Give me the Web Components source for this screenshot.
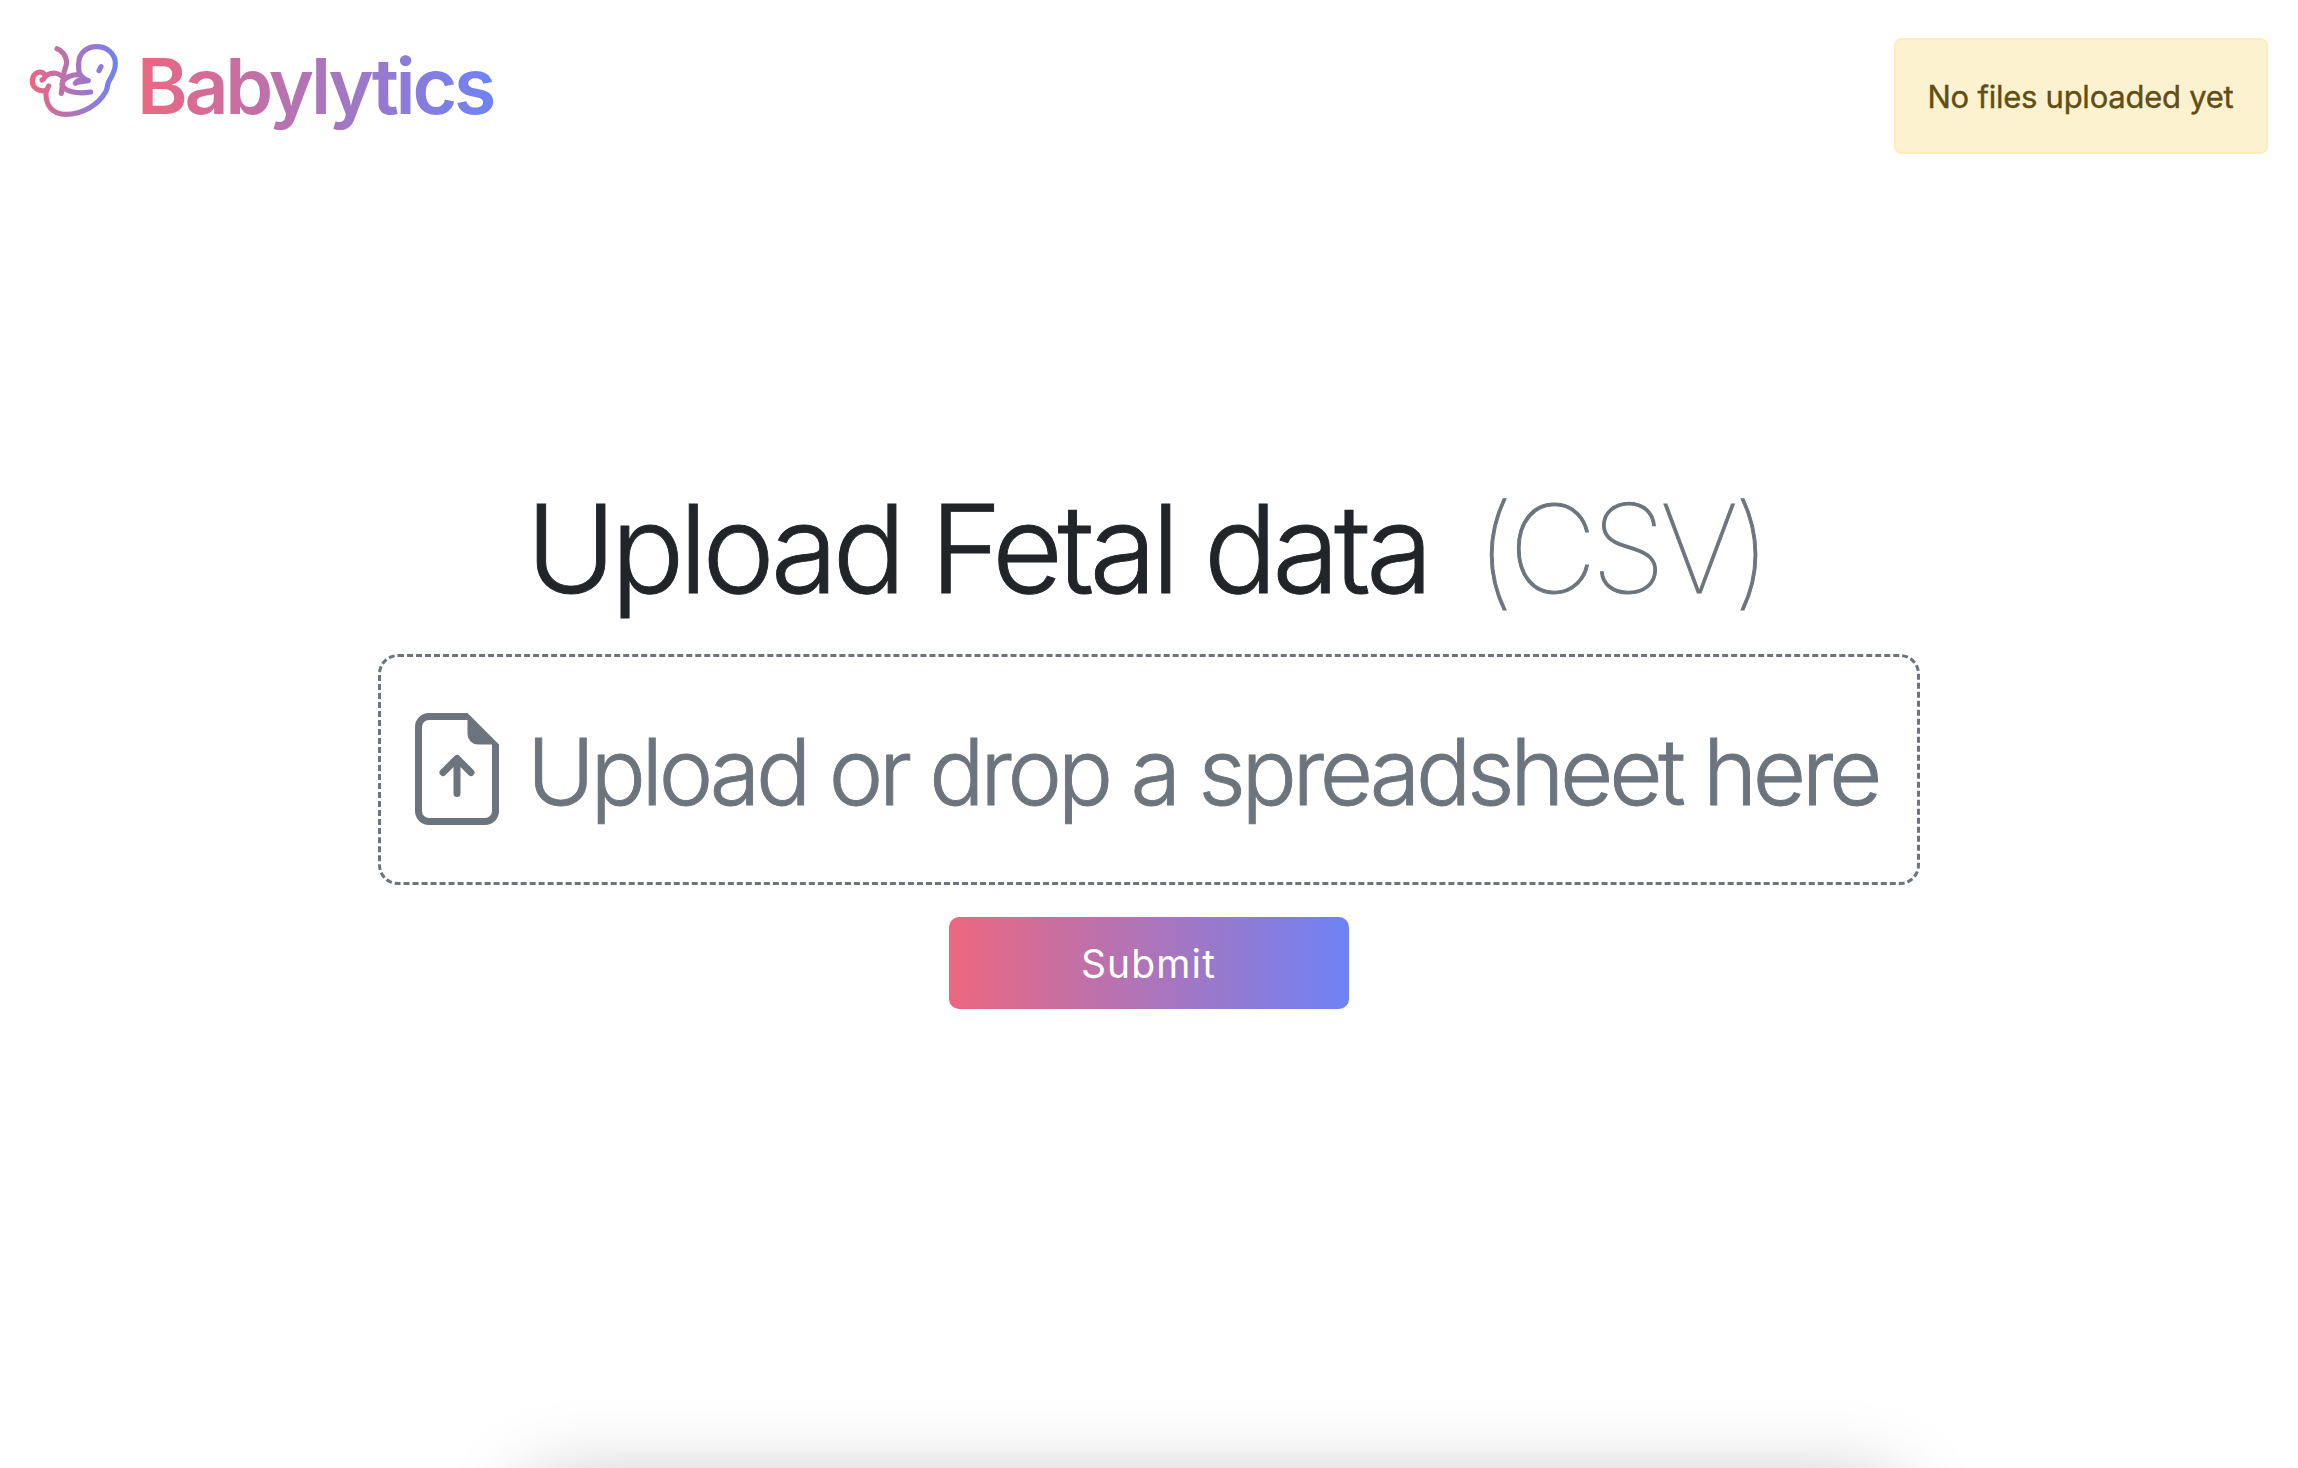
<!DOCTYPE html>
<html lang="en">
<head>
<meta charset="utf-8">
<title>Babylytics</title>
<style>
html, body { margin: 0; height: 100%; background: #fff; overflow: hidden; }
body { font-family: Inter, "Liberation Sans", sans-serif; color: #212529; }
</style>
</head>
<body>
<baby-app></baby-app>
<script>
const define = (name, html) => {
  const template = document.createElement('template');
  template.innerHTML = html;
  customElements.define(name, class extends HTMLElement {
    constructor() {
      super();
      this.attachShadow({ mode: 'open' }).append(template.content.cloneNode(true));
    }
  });
};

define('baby-logo', `
<style>
:host { display: block; width: 110px; height: 100px; }
svg { display: block; }
</style>
<svg width="110" height="100" viewBox="0 -15 330 300" fill="none" stroke="url(#g)" stroke-width="15.5" stroke-linecap="round" stroke-linejoin="round">
  <defs><linearGradient id="g" gradientUnits="userSpaceOnUse" x1="30" y1="0" x2="294" y2="0"><stop offset="0" stop-color="#ec677f"/><stop offset="1" stop-color="#6e82f5"/></linearGradient></defs>
  <path d="M111 41C127 46 138 63 140 79C141 96 131 101 131 121L124 175"/>
  <path d="M204 137C190 131 176 119 176 101V86C176 54 200 35 230 35C261 35 286 56 286 86C286 110 274 125 266 140C261 150 264 160 256 172C237 207 190 238 137 238C97 238 78 211 78 178C78 165 83 159 86 153"/>
  <path d="M78 167C58 170 37 160 37 138C37 121 49 111 62 111C69 112 71 115 74 119"/>
  <path d="M66 135C75 132 74 124 83 119C99 111 116 114 125 123"/>
  <path d="M128 139C138 126 157 119 178 119"/>
  <path d="M126 148C132 170 172 178 212 171"/>
  <path d="M166 145C171 136 180 133 190 132L204 137C193 141 179 138 166 145"/>
  <path d="M243 95L237 107"/>
</svg>`);

define('baby-brand', `
<style>
:host { display: flex; align-items: flex-start; gap: 7px; }
.name { margin-top: 9px; font-size: 77px; line-height: 94px; font-weight: 600; letter-spacing: -3.3px; white-space: nowrap;
  background: linear-gradient(90deg, #ec677f, #6e82f5); -webkit-background-clip: text; background-clip: text; color: transparent; }
</style>
<baby-logo></baby-logo>
<span class="name"><slot></slot></span>`);

define('baby-alert', `
<style>
:host { display: flex; align-items: center; box-sizing: border-box; width: 374px; height: 116px; padding: 1px 0 0 31.5px;
  border: 2px solid #feecb9; border-radius: 8px; background: #fdf2d0; color: #614e14;
  font-size: 31px; line-height: 38px; letter-spacing: -0.25px; white-space: nowrap; -webkit-text-stroke: 0.4px currentColor; }
</style>
<slot></slot>`);

define('baby-title', `
<style>
:host { display: flex; gap: 48px; margin-right: 7px; font-size: 122.5px; line-height: 148px; font-weight: 300;
  letter-spacing: -5.37px; white-space: nowrap; -webkit-text-stroke: 0.9px currentColor; }
.hint { color: #6c757d; font-weight: 100; letter-spacing: -6px; font-feature-settings: "calt" 0; -webkit-text-stroke: 1px #6c757d; }
</style>
<span><slot></slot></span>
<span class="hint"><slot name="hint"></slot></span>`);

define('baby-dropzone', `
<style>
:host { display: flex; align-items: center; gap: 14px; box-sizing: border-box; width: 1542px; height: 231px; padding-left: 20px;
  border: 3px dashed #6c757d; border-radius: 20px; color: #6c757d; }
svg { display: block; flex: none; margin-bottom: 1px; }
span { padding-top: 3px; font-size: 92px; line-height: 111px; font-weight: 300; letter-spacing: -4.3px; white-space: nowrap; -webkit-text-stroke: 0.9px currentColor; }
</style>
<svg width="112" height="112" viewBox="0 0 16 16" fill="currentColor">
  <path d="M8.5 11.5a.5.5 0 0 1-1 0V7.707L6.354 8.854a.5.5 0 1 1-.708-.708l2-2a.5.5 0 0 1 .708 0l2 2a.5.5 0 0 1-.708.708L8.5 7.707V11.5z"/>
  <path d="M14 14V4.5L9.5 0H4a2 2 0 0 0-2 2v12a2 2 0 0 0 2 2h8a2 2 0 0 0 2-2zM9.5 3A1.5 1.5 0 0 0 11 4.5h2V14a1 1 0 0 1-1 1H4a1 1 0 0 1-1-1V2a1 1 0 0 1 1-1h5.5v2z"/>
</svg>
<span><slot></slot></span>`);

define('baby-button', `
<style>
:host { display: block; }
button { display: flex; align-items: center; justify-content: center; width: 400px; height: 92px; padding: 0 1px 0 0; border: 0; border-radius: 10px;
  background: linear-gradient(90deg, #ec677f, #6e82f5); color: #fff; font: 400 39px/47px Inter, sans-serif; letter-spacing: 1.15px; }
</style>
<button type="button"><slot></slot></button>`);

define('baby-app', `
<style>
:host { position: relative; display: flex; flex-direction: column; height: 100vh; overflow: hidden; background: #fff; }
header { display: flex; justify-content: space-between; align-items: flex-start; box-sizing: border-box; height: 192px; padding: 30px 30px 0 20px; }
baby-alert { margin-top: 8px; }
main { display: flex; flex-direction: column; align-items: center; padding-top: 283px; }
baby-dropzone { margin-top: 31px; }
baby-button { margin-top: 32px; }
.shade { position: absolute; left: 529px; right: 403px; top: 100%; margin-top: 17px; height: 200px; border-radius: 20px; box-shadow: 0 0 82px rgba(0, 0, 0, .27); }
</style>
<header>
  <baby-brand>Babylytics</baby-brand>
  <baby-alert>No files uploaded yet</baby-alert>
</header>
<main>
  <baby-title>Upload Fetal data<span slot="hint">(CSV)</span></baby-title>
  <baby-dropzone>Upload or drop a spreadsheet here</baby-dropzone>
  <baby-button>Submit</baby-button>
</main>
<div class="shade"></div>`);
</script>
</body>
</html>
